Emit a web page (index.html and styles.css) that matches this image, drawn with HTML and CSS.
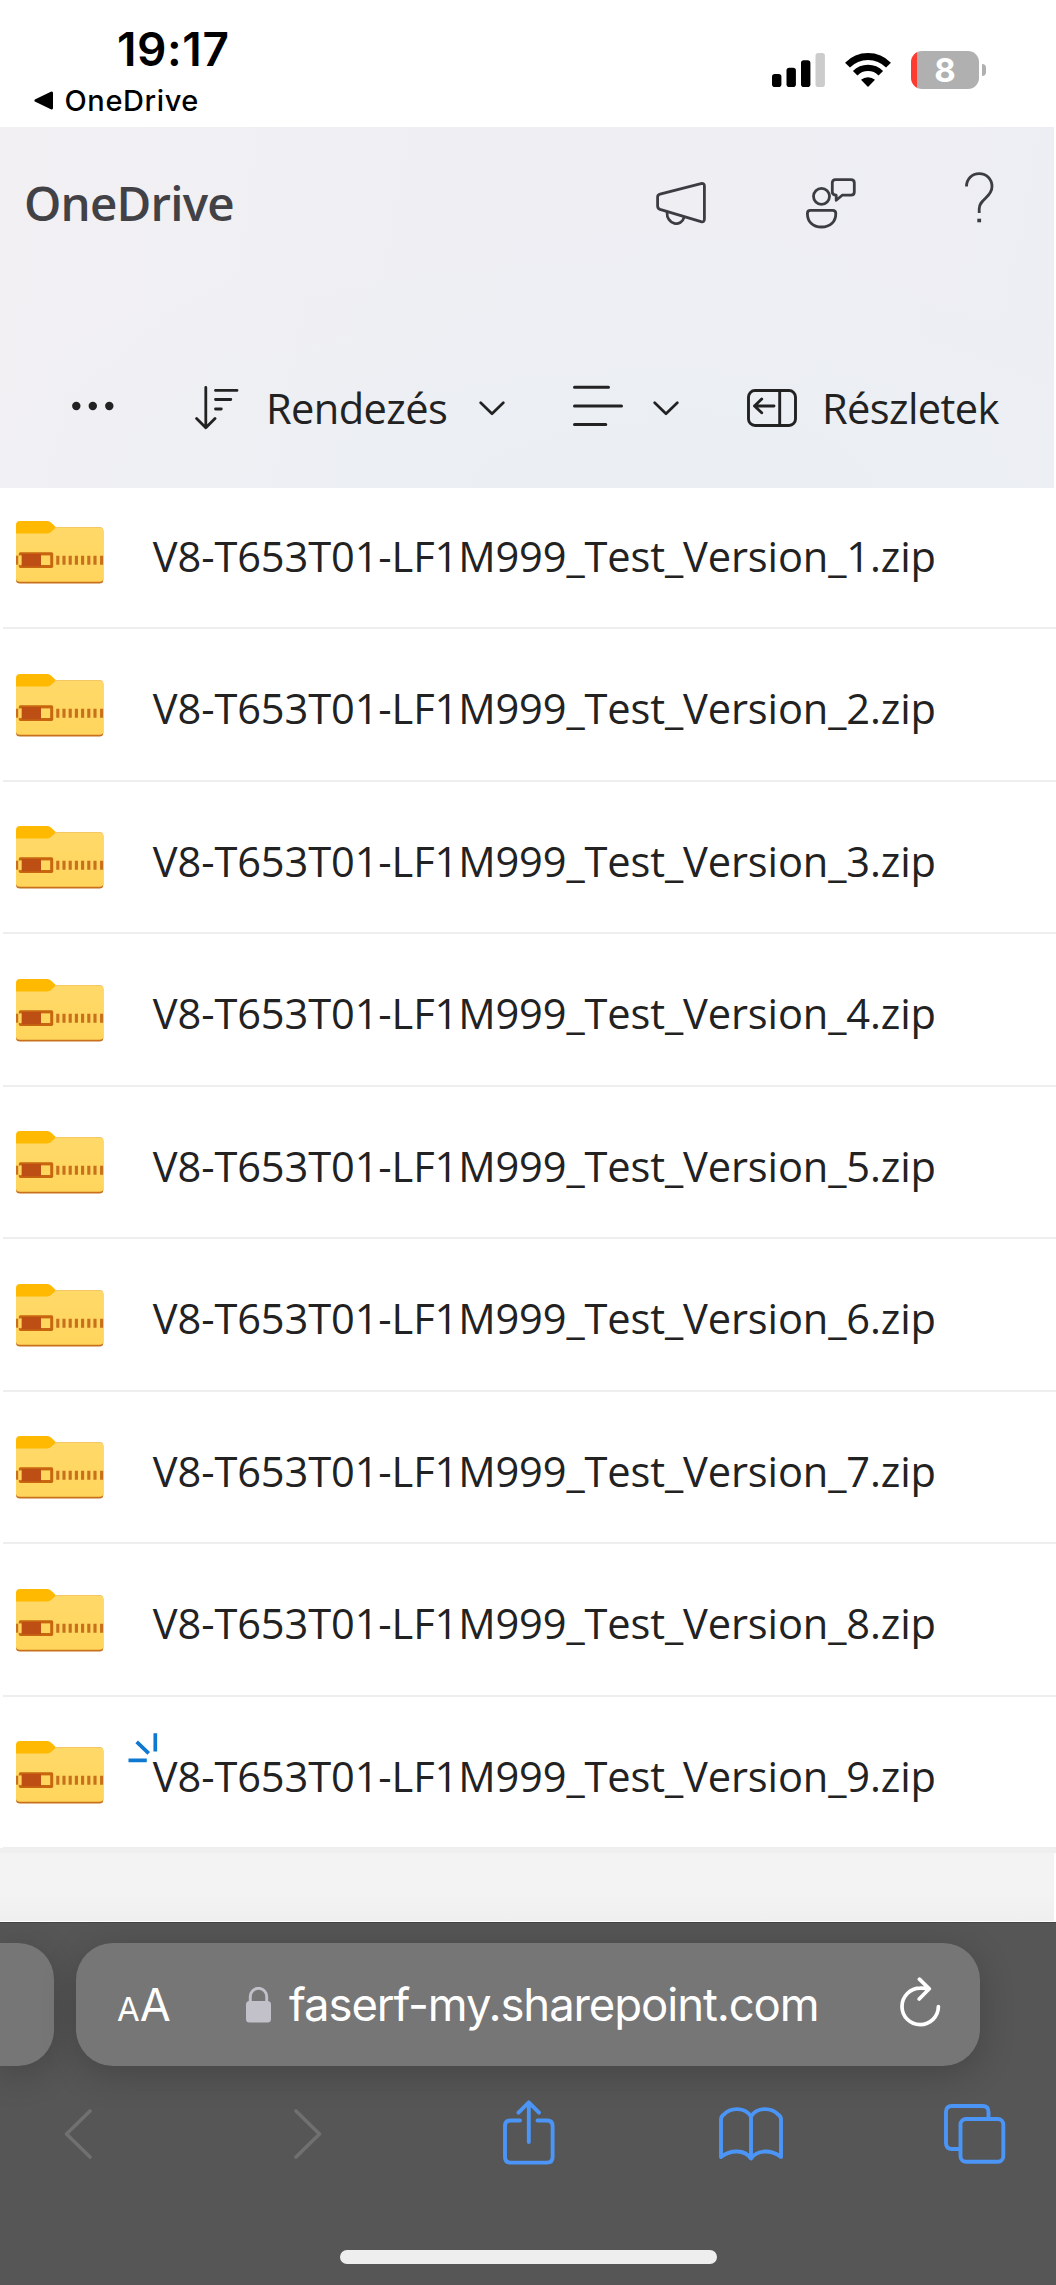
FILE: index.html
```
<!DOCTYPE html>
<html lang="hu">
<head>
<meta charset="utf-8">
<title>OneDrive</title>
<link rel="stylesheet" href="styles.css">
</head>
<body>
<svg width="0" height="0" class="defs">
  <defs>
    <linearGradient id="fold" x1="0" y1="0" x2="0" y2="1"><stop offset="0" stop-color="#ffd969"/><stop offset="1" stop-color="#ffd55c"/></linearGradient>
    <symbol id="zip" viewBox="0 0 88 63">
      <path d="M0 9H36L41 6.3H83.5Q87.3 6.3 87.3 10V59Q87.3 62.5 83.5 62.5H4Q0 62.5 0 59Z" fill="#c8701c"/>
      <path d="M0 9H36L41 6.3H83.5Q87.3 6.3 87.3 10V57.5Q87.3 60.7 83.5 60.7H4Q0 60.7 0 57.5Z" fill="url(#fold)"/>
      <path d="M0 12.4V4Q0 0 4 0H31.5Q33.5 0 35 1.5L40 6.2L35 11Q33.5 12.4 31.5 12.4Z" fill="#ffb900"/>
      <rect x="0" y="34.7" width="2" height="9" fill="#c8701c"/>
      <rect x="2.8" y="31.3" width="34.4" height="15.6" rx="1.6" fill="#c8650f"/>
      <rect x="6" y="33" width="19" height="12.3" fill="#bd4f14"/>
      <rect x="3" y="34.2" width="2.6" height="10" rx="1" fill="#ffd35c"/>
      <rect x="25" y="34.4" width="9.2" height="9.6" fill="#ffd75f"/>
      <path d="M41.8 34.7v9M48 34.7v9M54.2 34.7v9M60.4 34.7v9M66.6 34.7v9M72.8 34.7v9M79 34.7v9M85.6 34.7v9" stroke="#c8701c" stroke-width="3.1"/>
    </symbol>
    <symbol id="chev" viewBox="0 0 26 15"><path d="M1.7 1.7L13 12.7L24.3 1.7" fill="none" stroke="#222" stroke-width="2.7" stroke-linecap="round" stroke-linejoin="round"/></symbol>
  </defs>
</svg>

<section class="status">
  <div class="clock-col">
    <div class="clock">19:17</div>
    <div class="back-app"><svg width="20" height="19" viewBox="0 0 20 19"><path d="M2 9.5L17.5 2V17Z" fill="#000" stroke="#000" stroke-width="3" stroke-linejoin="round"/></svg><span>OneDrive</span></div>
  </div>
  <div class="indicators">
    <svg width="53" height="34" viewBox="0 0 53 34"><rect x="0" y="21" width="9.4" height="13" rx="2.8"/><rect x="14.5" y="14.7" width="9.4" height="19.3" rx="2.8"/><rect x="29" y="7.3" width="9.4" height="26.7" rx="2.8"/><rect x="43.5" y="0" width="9.4" height="34" rx="2.8" fill="#ccc"/></svg>
    <svg class="wifi" width="46" height="34" viewBox="0 0 46 34"><g fill="none" stroke="#000"><path d="M2.5 12.2A28.5 28.5 0 0 1 43.5 12.2" stroke-width="6.8"/><path d="M10.2 20.2A18 18 0 0 1 35.8 20.2" stroke-width="6.4"/></g><path d="M16 26.8A10.5 10.5 0 0 1 30 26.8L23 34Z"/></svg>
    <div class="battery"><span>8</span></div>
    <div class="nub"></div>
  </div>
</section>

<header class="header">
  <div class="brandbar">
    <h1>OneDrive</h1>
    <svg class="i-mega" width="50" height="44" viewBox="0 0 50 44"><g fill="none" stroke="#3c3d42" stroke-width="2.8" stroke-linejoin="round"><path d="M4 12.2L45 1.6Q48.4 1 48.4 4V37Q48.4 40.6 45 39.7L4 27.3Q1.6 26.5 1.6 24V15.2Q1.6 12.9 4 12.2Z"/><path d="M11 29.8C10.4 43 25.5 45.5 28.2 35"/></g></svg>
    <svg class="i-person" width="50" height="51" viewBox="0 0 50 51"><g fill="none" stroke="#3c3d42" stroke-width="2.8" stroke-linejoin="round"><circle cx="15.5" cy="18.3" r="8"/><path d="M4.4 32.3H26.6Q29.8 32.3 29.8 35.4C29.8 43.5 24.5 49 15.5 49S1.4 43.5 1.4 35.4Q1.4 32.3 4.4 32.3Z"/><path d="M29.5 1.6H45Q48.3 1.6 48.3 4.8V14Q48.3 17.2 45 17.2H36.2L30.2 22.3V17.2Q26.3 17 26.3 14V4.8Q26.3 1.6 29.5 1.6Z"/></g></svg>
    <svg class="i-help" width="29" height="51" viewBox="0 0 29 51"><path d="M1.5 14.5C1.5 7 7 1.6 14.2 1.6S27 7 27 14.5C27 20 24 23 20.5 26.2C17 29.5 14.2 32 14.2 37V41" fill="none" stroke="#3c3d42" stroke-width="2.8"/><rect x="12.3" y="46.7" width="3.8" height="3.6" fill="#3c3d42"/></svg>
  </div>
  <div class="toolbar">
    <svg class="i-more" width="42" height="10" viewBox="0 0 42 10"><g fill="#222"><circle cx="4.3" cy="5" r="4.2"/><circle cx="20.8" cy="5" r="4.2"/><circle cx="37.3" cy="5" r="4.2"/></g></svg>
    <svg class="i-sort" width="44" height="44" viewBox="0 0 44 44"><path d="M10.8 1.4V41.6M1.6 32.4L10.8 41.8L20 32.4M20.5 4.4H42M20.5 13.5H35.8M20.5 23H26.3" fill="none" stroke="#222" stroke-width="2.8" stroke-linecap="round" stroke-linejoin="round"/></svg>
    <span class="lbl lbl-sort">Rendezés</span>
    <svg class="c1" width="26" height="15"><use href="#chev"/></svg>
    <svg class="i-list" width="50" height="42" viewBox="0 0 50 42"><path d="M1.5 2.3H35.5M1.5 21H48.5M1.5 39.6H32.8" stroke="#222" stroke-width="3" stroke-linecap="round"/></svg>
    <svg class="c2" width="26" height="15"><use href="#chev"/></svg>
    <svg class="i-panel" width="50" height="38" viewBox="0 0 50 38"><g fill="none" stroke="#222" stroke-width="2.9" stroke-linecap="round" stroke-linejoin="round"><rect x="1.5" y="1.5" width="47" height="35" rx="6.5"/><path d="M32.7 1.5V36.5M27 17H7.5M14.7 10L7.5 17L14.7 23.8"/></g></svg>
    <span class="lbl lbl-details">Részletek</span>
  </div>
</header>

<main class="list">
  <ul>
    <li><svg class="zip"><use href="#zip"/></svg><span>V8-T653T01-LF1M999_Test_Version_1.zip</span></li>
    <li><svg class="zip"><use href="#zip"/></svg><span>V8-T653T01-LF1M999_Test_Version_2.zip</span></li>
    <li><svg class="zip"><use href="#zip"/></svg><span>V8-T653T01-LF1M999_Test_Version_3.zip</span></li>
    <li><svg class="zip"><use href="#zip"/></svg><span>V8-T653T01-LF1M999_Test_Version_4.zip</span></li>
    <li><svg class="zip"><use href="#zip"/></svg><span>V8-T653T01-LF1M999_Test_Version_5.zip</span></li>
    <li><svg class="zip"><use href="#zip"/></svg><span>V8-T653T01-LF1M999_Test_Version_6.zip</span></li>
    <li><svg class="zip"><use href="#zip"/></svg><span>V8-T653T01-LF1M999_Test_Version_7.zip</span></li>
    <li><svg class="zip"><use href="#zip"/></svg><span>V8-T653T01-LF1M999_Test_Version_8.zip</span></li>
    <li><svg class="zip"><use href="#zip"/></svg><span>V8-T653T01-LF1M999_Test_Version_9.zip</span>
      <svg class="new-mark" width="30" height="30" viewBox="0 0 30 30"><path d="M0.5 27.3H18.8M8.7 8.8L20.7 20.3M27.3 0.3V18.5" stroke="#0f78d0" stroke-width="3.7"/></svg></li>
  </ul>
</main>
<div class="page-end"></div>

<footer class="safari">
  <div class="tabs-strip">
    <div class="prev-tab"></div>
    <div class="address">
      <div class="aa"><small>A</small><big>A</big></div>
      <svg class="lock" width="25" height="36" viewBox="0 0 25 36"><rect x="0" y="14" width="25" height="21.5" rx="3.5" fill="#c2c0c8"/><path d="M4.3 15V9.5a8.2 8.2 0 0 1 16.4 0V15" fill="none" stroke="#c2c0c8" stroke-width="2.9"/></svg>
      <span class="url">faserf-my.sharepoint.com</span>
      <svg class="reload" width="42" height="51" viewBox="0 0 42 51"><path d="M38.4 29.5A18.2 18.2 0 1 1 20.2 11.2Q25.5 11 29 12M19.4 2.2L29.3 11.8L19.2 22" fill="none" stroke="#fff" stroke-width="3.7" stroke-linecap="round" stroke-linejoin="round"/></svg>
    </div>
  </div>
  <nav class="nav">
    <svg class="n-back" width="28" height="50" viewBox="0 0 28 50"><path d="M26 2L2.5 25L26 48" fill="none" stroke="#707070" stroke-width="3.6" stroke-linecap="round" stroke-linejoin="round"/></svg>
    <svg class="n-fwd" width="28" height="50" viewBox="0 0 28 50"><path d="M2 2L25.5 25L2 48" fill="none" stroke="#707070" stroke-width="3.6" stroke-linecap="round" stroke-linejoin="round"/></svg>
    <svg class="n-share" width="52" height="65" viewBox="0 0 52 65"><path d="M17 20.5H7.5Q2 20.5 2 26V57Q2 62.6 7.5 62.6H44Q49.6 62.6 49.6 57V26Q49.6 20.5 44 20.5H34.5M25.8 42V2.4M15.5 12.6L25.8 2.4L36 12.6" fill="none" stroke="#4b95f7" stroke-width="3.9" stroke-linecap="round" stroke-linejoin="round"/></svg>
    <svg class="n-book" width="64" height="54" viewBox="0 0 64 54"><path d="M2 50V12.5Q2 9.8 4.5 7.8C12 0 26 0 32 9.5C38 0 52 0 59.5 7.8Q62 9.8 62 12.5V50C52 42.5 38.5 42.5 32 51.5C25.5 42.5 12 42.5 2 50ZM32 9.5V51" fill="none" stroke="#4b95f7" stroke-width="3.9" stroke-linejoin="round"/></svg>
    <svg class="n-tabs" width="62" height="60" viewBox="0 0 62 60"><g fill="none" stroke="#4b95f7" stroke-width="3.9"><rect x="16.5" y="15" width="42.8" height="42.8" rx="5.5"/><path d="M44.5 14V8Q44.5 2 38.5 2H8Q2 2 2 8V39Q2 45 8 45H15.5"/></g></svg>
  </nav>
  <div class="home"></div>
</footer>
</body>
</html>
```
FILE: styles.css
```
* { box-sizing: border-box; }
body { margin: 0; width: 1056px; height: 2285px; background: #fff; font-family: "Open Sans", "Noto Sans", sans-serif; color: #222; display: flex; flex-direction: column; overflow: hidden; }
svg { display: block; flex: none; }
.defs { position: absolute; }
span, h1, .clock { white-space: nowrap; }

.status { height: 127px; display: flex; align-items: flex-start; font-family: Inter, sans-serif; color: #000; flex: none; }
.clock-col { width: 772px; padding-top: 21px; }
.clock { margin-left: 117px; font-size: 46px; line-height: 56px; font-weight: 600; letter-spacing: 0.6px; }
.back-app { display: flex; align-items: center; margin: 5px 0 0 34px; height: 37px; font-size: 29px; line-height: 37px; font-weight: 450; letter-spacing: 0.6px; }
.back-app span { margin-left: 10.5px; }
.indicators { display: flex; align-items: center; padding-top: 51px; height: 89px; }
.wifi { margin-left: 20px; }
.battery { width: 68px; height: 38px; margin-left: 20px; border-radius: 11px; background: linear-gradient(90deg, #fe3b30 6px, #b0b0b0 6px); color: #fff; font-size: 33px; font-weight: 700; line-height: 38px; text-align: center; }
.nub { width: 4px; height: 12px; margin-left: 3px; border-radius: 0 6px 6px 0; background: #b0b0b0; }

.header { height: 361px; width: 1054px; flex: none; background: radial-gradient(ellipse 700px 260px at 60% 100%, rgba(233,239,244,.8), rgba(233,239,244,0)), linear-gradient(100deg, #f2f0f3, #efeff3 40%, #edeef3); }
.brandbar { height: 156px; display: flex; align-items: flex-start; }
h1 { margin: 43px 0 0 24px; width: 632px; font-size: 47.5px; line-height: 66px; font-weight: 600; color: #424246; letter-spacing: -0.8px; }
.i-mega { margin-top: 54.5px; }
.i-person { margin: 50.5px 0 0 100px; }
.i-help { margin: 44.5px 0 0 109px; }
.toolbar { height: 205px; display: flex; align-items: flex-start; }
.lbl { font-size: 41.6px; line-height: 58px; margin-top: 96px; flex: none; letter-spacing: -0.6px; }
.i-more { margin: 117.5px 0 0 72px; }
.i-sort { margin: 102.5px 0 0 81px; }
.lbl-sort { margin-left: 27px; width: 213px; }
.c1 { margin-top: 118px; }
.i-list { margin: 102px 0 0 68px; }
.c2 { margin: 118px 0 0 30px; }
.i-panel { margin: 105.5px 0 0 68px; }
.lbl-details { margin-left: 25px; }

.list { height: 1365px; flex: none; overflow: hidden; background: #fff; border-bottom: 5px solid #efefef; }
ul { list-style: none; margin: -11.5px 0 0; padding: 0; }
li { height: 152.5px; margin-left: 3px; border-bottom: 2px solid #eee; display: flex; align-items: center; position: relative; }
.zip { width: 88px; height: 63px; margin: 2px 0 0 12.8px; }
li span { font-size: 41.6px; line-height: 58px; margin: 8px 0 0 49px; letter-spacing: -0.12px; }
.new-mark { position: absolute; left: 124.5px; top: 36.5px; }

.page-end { height: 69px; flex: none; width: 1054px; background: linear-gradient(#f3f3f4 60%, #efefef); border-bottom: 1px solid #fff; }

.safari { flex: none; height: 363px; background: #565656; font-family: Inter, sans-serif; overflow: hidden; box-shadow: inset 0 1px #444; }
.tabs-strip { display: flex; padding-top: 20.5px; gap: 22px; }
.prev-tab { width: 54px; height: 123px; border-radius: 0 36px 36px 0; background: #767676; box-shadow: 0 8px 36px rgba(0,0,0,.2); }
.address { width: 904px; height: 123px; border-radius: 37px; background: #767676; box-shadow: 0 8px 36px rgba(0,0,0,.2); color: #fff; display: flex; align-items: flex-start; }
.aa { margin: 34px 0 0 41px; width: 129px; line-height: 56px; white-space: nowrap; }
.aa small { font-size: 33px; }
.aa big { font-size: 45px; }
.lock { margin-top: 44px; }
.url { font-size: 45.5px; line-height: 56px; margin: 34px 0 0 18px; width: 611px; letter-spacing: -1.1px; }
.reload { margin-top: 34.5px; }
.nav { height: 184px; display: flex; align-items: flex-start; }
.n-back { margin: 43px 0 0 64px; }
.n-fwd { margin: 43px 0 0 202px; }
.n-share { margin: 34px 0 0 180.7px; }
.n-book { margin: 41px 0 0 164.5px; }
.n-tabs { margin: 38px 0 0 161px; }
.home { width: 377px; height: 14px; margin: 0 auto; border-radius: 7px; background: #eee; }
```
